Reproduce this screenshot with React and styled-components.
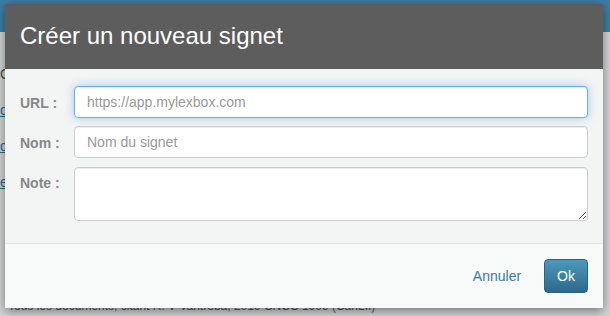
import React from "react";
import styled, { createGlobalStyle, css } from "styled-components";

const GlobalStyle = createGlobalStyle`
  html, body {
    margin: 0;
    padding: 0;
    width: 610px;
    height: 316px;
    overflow: hidden;
    background: #d2d3d4;
    font-family: "Liberation Sans", Arial, sans-serif;
    font-size: 14px;
  }
`;

const Page = styled.div`
  position: relative;
  width: 610px;
  height: 316px;
  overflow: hidden;
  background: #d3d4d5;
`;

const TopBar = styled.div`
  height: 32px;
  background: #3b7ea3;
`;

const SideStrip = styled.div`
  width: 5px;
  overflow: hidden;
  padding-top: 34px;
  display: flex;
  flex-direction: column;
  gap: 20px;
  color: #4a4a4a;
  white-space: nowrap;
`;

const StripText = styled.div`
  color: ${(p) => (p.$link ? "#2c6a90" : "#4a4a4a")};
  text-decoration: ${(p) => (p.$link ? "underline" : "none")};
`;

const PageFooterText = styled.div`
  position: absolute;
  left: 8px;
  top: 299px;
  font-size: 12px;
  line-height: 14px;
  color: #555;
  white-space: nowrap;
`;

const Modal = styled.div`
  position: absolute;
  left: 5px;
  top: 4px;
  width: 598px;
  height: 304px;
  display: flex;
  flex-direction: column;
  box-shadow: 0 3px 10px rgba(0, 0, 0, 0.45);
  overflow: hidden;
`;

const ModalHeader = styled.div`
  height: 65px;
  box-sizing: border-box;
  padding: 19px 15px 0;
  background: #5d5d5d;
  color: #fff;
  font-size: 24px;
  line-height: 26px;
`;

const ModalBody = styled.div`
  flex: 1;
  background: #f3f4f4;
  padding: 17px 15px 0;
  display: grid;
  grid-template-columns: 54px 1fr;
  row-gap: 8px;
  align-content: start;
`;

const Label = styled.label`
  padding-top: 7px;
  font-weight: bold;
  color: #888;
  line-height: 20px;
`;

const fieldStyles = css`
  box-sizing: border-box;
  width: 100%;
  border: 1px solid #ccc;
  border-radius: 4px;
  background: #fff;
  padding: 6px 12px;
  font-family: "Liberation Sans", Arial, sans-serif;
  font-size: 14px;
  color: #555;
  outline: none;
  box-shadow: inset 0 1px 1px rgba(0, 0, 0, 0.075);
  &::placeholder {
    color: #999;
  }
  ${(p) =>
    p.$focused &&
    css`
      border-color: #66afe9;
      box-shadow: inset 0 1px 1px rgba(0, 0, 0, 0.075),
        0 0 8px rgba(102, 175, 233, 0.6);
    `}
`;

const Input = styled.input`
  ${fieldStyles}
  height: 32px;
`;

const TextArea = styled.textarea`
  ${fieldStyles}
  height: 54px;
  margin-top: 1px;
  resize: vertical;
  display: block;
`;

const ModalFooter = styled.div`
  height: 65px;
  box-sizing: border-box;
  border-top: 1px solid #e3e4e4;
  background: #f8f9f9;
  padding: 15px 15px 0;
  display: flex;
  justify-content: flex-end;
  align-items: flex-start;
  gap: 10px;
`;

const LinkButton = styled.button`
  border: 1px solid transparent;
  background: none;
  padding: 6px 12px;
  font-family: "Liberation Sans", Arial, sans-serif;
  font-size: 14px;
  line-height: 20px;
  color: #3a7ba3;
  cursor: pointer;
`;

const PrimaryButton = styled.button`
  border: 1px solid #2a6383;
  border-radius: 4px;
  background: linear-gradient(to bottom, #4e98be 0%, #2e6889 100%);
  padding: 6px 12px;
  font-family: "Liberation Sans", Arial, sans-serif;
  font-size: 14px;
  line-height: 20px;
  color: #fff;
  cursor: pointer;
`;

export default function App() {
  return (
    <>
      <GlobalStyle />
      <Page>
        <TopBar />
        <SideStrip>
          <StripText>Citations</StripText>
          <StripText $link>documents</StripText>
          <StripText $link>décisions</StripText>
          <StripText $link>extraits</StripText>
        </SideStrip>
        <PageFooterText>
          Tous les documents, citant R. V Vantroba, 2019 CNCC 1909 (CanLII)
        </PageFooterText>
        <Modal>
          <ModalHeader>Créer un nouveau signet</ModalHeader>
          <ModalBody>
            <Label>URL :</Label>
            <Input $focused placeholder="https://app.mylexbox.com" />
            <Label>Nom :</Label>
            <Input placeholder="Nom du signet" />
            <Label>Note :</Label>
            <TextArea />
          </ModalBody>
          <ModalFooter>
            <LinkButton>Annuler</LinkButton>
            <PrimaryButton>Ok</PrimaryButton>
          </ModalFooter>
        </Modal>
      </Page>
    </>
  );
}
